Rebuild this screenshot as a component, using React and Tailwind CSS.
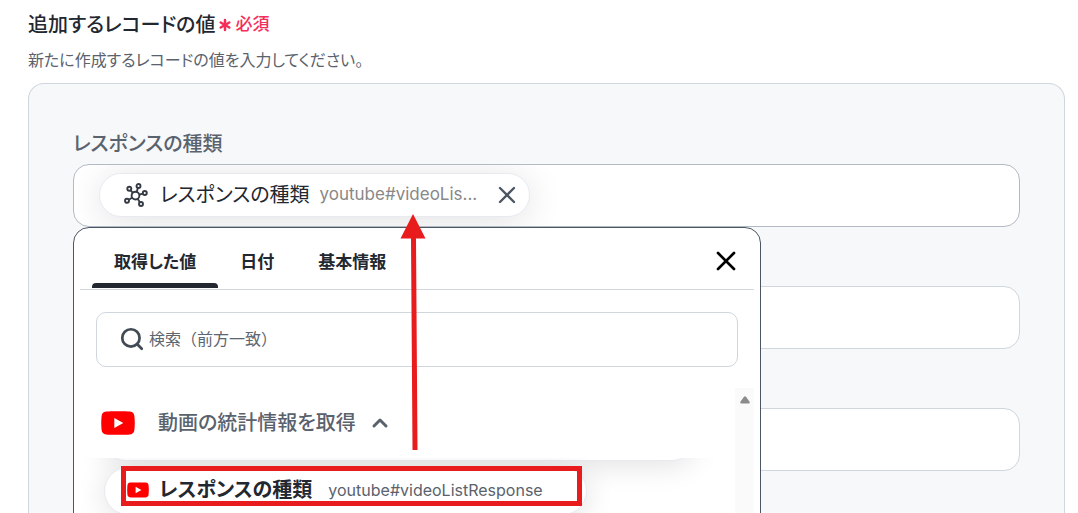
import { X, Search, ChevronUp, Asterisk } from 'lucide-react'

const tabs = ['取得した値', '日付', '基本情報']

function YoutubeIcon({ className }) {
  return (
    <svg viewBox="0 0 34 24" className={className} aria-hidden="true">
      <path
        fill="#ff0000"
        d="M5 .6C9 .1 25 .1 29 .6c2.600.3 4.100 1.800 4.400 4.400.5 4.500.5 9.500 0 14-.3 2.600-1.800 4.100-4.400 4.400-4 .5-20 .5-24 0C2.400 23.100.9 21.600.6 19c-.5-4.500-.5-9.500 0-14C.9 2.400 2.400.9 5 .6z"
      />
      <path fill="#fff" d="M13.300 7v10l9-5z" />
    </svg>
  )
}

function HubIcon({ className }) {
  return (
    <svg viewBox="0 0 24 24" className={className} fill="none" stroke="currentColor" strokeWidth="1.900" aria-hidden="true">
      <circle cx="11.500" cy="12.600" r="3.900" />
      <circle cx="5.300" cy="5.800" r="2" />
      <circle cx="14.500" cy="3" r="2" />
      <circle cx="20.800" cy="10" r="2" />
      <circle cx="3" cy="17.800" r="2" />
      <circle cx="17" cy="21" r="2" />
      <path d="M6.700 7.400l2.100 2.400M13.900 4.900l-1.200 4M18.700 10.600l-3.300 1M4.900 16.700l3-1.900M15.800 19.200l-2-3.200" />
    </svg>
  )
}

function ValuePanel() {
  return (
    <div className="absolute top-[62px] -left-px z-10 h-[400px] w-[688px] rounded-t-2xl border border-[#4b5663] bg-white">
      <div className="mx-1.5 flex h-[62px] items-end justify-between border-b border-[#cfd6de] pr-3 pl-3">
        <div role="tablist" className="flex">
          {tabs.map((tab, i) => (
            <button
              key={tab}
              type="button"
              role="tab"
              aria-selected={i === 0}
              className="relative px-[22px] pb-[15px] text-[17px] leading-6 font-bold text-[#23272f]"
            >
              {tab}
              {i === 0 && <span className="absolute inset-x-0 bottom-px h-[5px] rounded-t-[4px] bg-[#23272f]" />}
            </button>
          ))}
        </div>
        <button type="button" aria-label="閉じる" className="mb-3 text-black">
          <X size={32} strokeWidth={2} />
        </button>
      </div>

      <div className="mx-[22px] mt-[22px] flex h-[55px] items-center rounded-[10px] border border-[#cfd6de] pb-0.5 pl-[22px]">
        <Search size={26} strokeWidth={2.500} className="text-[#414a55]" />
        <input
          type="text"
          aria-label="検索"
          placeholder="検索（前方一致）"
          className="ml-1 flex-1 bg-transparent text-base text-[#23272f] outline-none [font-feature-settings:normal] placeholder:text-[#5c6570]"
        />
      </div>

      <div className="mt-[21px] mr-1.5 flex h-[150px] overflow-hidden">
        <div className="flex min-w-0 flex-1 flex-col">
          <button type="button" className="flex h-[70px] shrink-0 items-center pl-[27px] text-xl font-medium text-[#5a626d]">
            <YoutubeIcon className="h-6 w-[34px]" />
            <span className="ml-[23px]">動画の統計情報を取得</span>
            <ChevronUp size={24} strokeWidth={3} className="ml-3" />
          </button>
          <div className="min-h-0 flex-1 overflow-hidden pl-[30px]">
            <div className="-mt-[41px] h-11 w-[590px] rounded-full border border-[#e8eaf0] bg-white shadow-[0_4px_30px_rgba(0,0,0,0.12)]" />
            <div className="relative mt-1.5 flex h-12 w-[483px] items-center rounded-full border border-[#e8eaf0] bg-white pb-0.5 pl-[22px] whitespace-nowrap shadow-[0_4px_30px_rgba(0,0,0,0.12)]">
              <YoutubeIcon className="h-4 w-[22px]" />
              <span className="ml-2.5 text-xl font-bold text-[#23272f]">レスポンスの種類</span>
              <span className="ml-4 text-base text-[#5a626d]">youtube#videoListResponse</span>
              <div className="absolute -top-0.5 right-1 left-4 h-10 border-5 border-[#e81c1c]" />
            </div>
          </div>
        </div>
        <div className="flex w-[19px] justify-center bg-[#fafafa] pt-2">
          <svg viewBox="0 0 10 8" className="h-2 w-2.500" aria-hidden="true">
            <path d="M4 .8q1-1 2 0l3.600 5q.6 1.700-1 1.700H1.400q-1.600 0-1-1.700z" fill="#8b8b8b" />
          </svg>
        </div>
      </div>
    </div>
  )
}

function ChipField() {
  return (
    <div className="relative h-[63px] rounded-2xl border border-[#b3bac4] bg-white">
      <div className="flex h-full items-center overflow-hidden rounded-2xl pb-0.5 pl-[25px]">
        <div className="flex h-11 w-[431px] shrink-0 items-center rounded-full border border-[#e8eaf2] bg-white px-6 whitespace-nowrap shadow-[0_4px_36px_rgba(0,0,0,0.12)]">
          <HubIcon className="size-6 text-[#353b44]" />
          <span className="ml-3 text-xl text-[#23272f]">レスポンスの種類</span>
          <span className="ml-2.5 text-[17px] text-[#888]">youtube#videoLis...</span>
          <button type="button" aria-label="削除" className="ml-auto -mr-4 text-[#4b5663]">
            <X size={28} strokeWidth={2} />
          </button>
        </div>
        <input id="response-type" type="text" className="min-w-0 flex-1 bg-transparent outline-none" />
      </div>
      <ValuePanel />
      <svg viewBox="0 0 26 236" className="absolute top-[49px] left-[326px] z-20 h-[236px] w-[26px]" aria-hidden="true">
        <path d="M13 0l12.500 24.500h-9.500l1.500 211.500h-5l-1.500-211.500H.5z" fill="#e81c1c" />
      </svg>
    </div>
  )
}

export default function App() {
  return (
    <main className="flex h-screen flex-col overflow-hidden bg-white pr-[13px] pl-7 font-[Inter,'Noto_Sans_CJK_JP',sans-serif] [font-feature-settings:'palt']">
      <div className="mt-2 flex h-[34px] shrink-0 items-center">
        <h1 className="text-xl font-medium text-[#23272f]">追加するレコードの値</h1>
        <Asterisk size={20} strokeWidth={3} className="text-[#f52d5b]" />
        <span className="text-[17px] font-medium text-[#f52d5b]">必須</span>
      </div>
      <p className="mt-1 h-[30px] shrink-0 text-base leading-7 text-[#5a626d]">新たに作成するレコードの値を入力してください。</p>

      <section className="mt-[7px] flex-1 rounded-t-2xl border border-b-0 border-[#cfd6de] bg-[#f6f8fa] px-11 pt-11">
        <label htmlFor="response-type" className="block h-9 text-xl leading-8 font-medium text-[#5a626d]">
          レスポンスの種類
        </label>
        <div className="flex flex-col gap-[59px]">
          <ChipField />
          <input type="text" aria-label="値2" className="h-[63px] rounded-2xl border border-[#cfd6de] bg-white px-6" />
          <input type="text" aria-label="値3" className="h-[63px] rounded-2xl border border-[#cfd6de] bg-white px-6" />
        </div>
      </section>
    </main>
  )
}
